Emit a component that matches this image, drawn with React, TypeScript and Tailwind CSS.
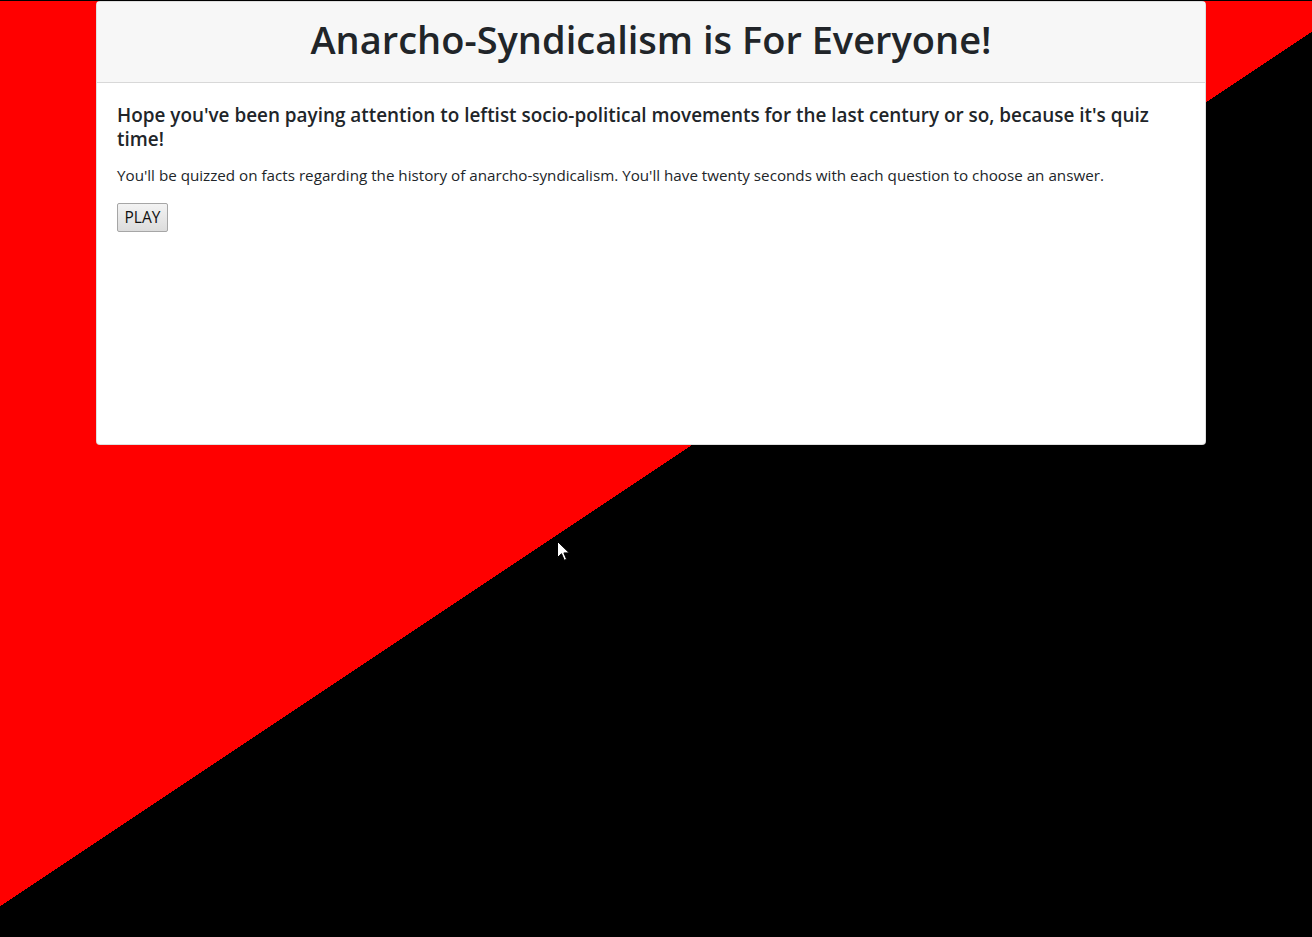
import React from "react";

export default function App() {
  return (
    <div className="relative h-[937px] w-full overflow-hidden border-t border-black/70 bg-[linear-gradient(146.3deg,#ff0000_50%,#000000_50%)] font-['Open_Sans','Noto_Sans',sans-serif] text-[#212529]">
      <div className="ml-[96px] flex h-[444px] w-[1110px] flex-col rounded-[4px] border border-black/[0.125] bg-white">
        <div className="flex h-[81px] items-start justify-center border-b border-black/[0.125] bg-[#f7f7f7] px-5 pt-[14px]">
          <h1 className="text-[38px] font-semibold leading-[46px]">Anarcho-Syndicalism is For Everyone!</h1>
        </div>
        <div className="flex flex-col items-start px-5 pt-5">
          <h5 className="mb-3 text-[18.9px] font-semibold leading-[24px]">
            Hope you've been paying attention to leftist socio-political movements for the last century or so, because it's quiz time!
          </h5>
          <p className="mb-4 text-[15.2px] leading-[24px]">
            You'll be quizzed on facts regarding the history of anarcho-syndicalism. You'll have twenty seconds with each question to choose an answer.
          </p>
          <button className="flex h-[29px] w-[51px] items-center justify-center rounded-[2px] border border-[#a6a6a6] bg-[linear-gradient(#f3f3f3,#dcdcdc)] text-[15.5px] leading-none text-[#111]">
            PLAY
          </button>
        </div>
      </div>
      <svg className="absolute left-[557px] top-[540px]" width="13" height="21" viewBox="0 0 13 21">
        <path d="M0.5 0.5 L0.5 16.5 L4.5 12.7 L7.3 19.3 L9.6 18.3 L6.9 11.9 L12.3 11.9 Z" fill="#ffffff" stroke="#000000" strokeWidth="1" strokeLinejoin="miter" />
      </svg>
    </div>
  );
}
